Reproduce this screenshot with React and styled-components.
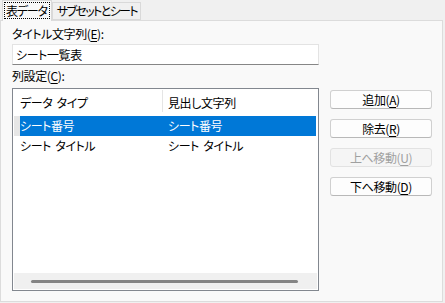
import React from "react";
import styled, { createGlobalStyle } from "styled-components";

const GlobalStyle = createGlobalStyle`
  html, body {
    margin: 0;
    padding: 0;
    background: #f0f0f0;
  }
  body {
    width: 445px;
    height: 303px;
    overflow: hidden;
    font-family: "Noto Sans CJK JP", "Noto Sans", sans-serif;
    font-size: 12px;
    font-feature-settings: "palt";
    letter-spacing: -0.4px;
    word-spacing: 2px;
    color: #000;
  }
`;

const Window = styled.div`
  width: 445px;
  height: 303px;
  display: flex;
  flex-direction: column;
`;

const TabStrip = styled.div`
  display: flex;
  align-items: flex-end;
  height: 20px;
  padding-left: 2px;
  position: relative;
  z-index: 1;
`;

const Tab = styled.div`
  box-sizing: border-box;
  height: ${(p) => (p.$active ? "21px" : "18px")};
  margin-bottom: ${(p) => (p.$active ? "-1px" : "0")};
  padding: ${(p) => (p.$active ? "1px 1px 0" : "0 3px 0 4px")};
  border: 1px solid #d9d9d9;
  border-bottom: ${(p) => (p.$active ? "none" : "1px solid #d9d9d9")};
  background: ${(p) => (p.$active ? "#f9f9f9" : "#f0f0f0")};
  display: flex;
  align-items: ${(p) => (p.$active ? "flex-start" : "center")};
  line-height: 16px;
  letter-spacing: ${(p) => (p.$active ? "-1.2px" : "-1.6px")};
  white-space: nowrap;
`;

const Focus = styled.span`
  display: block;
  padding: 0 2px 0 1px;
  border: 1px dotted #000;
  line-height: 15px;
`;

const Panel = styled.div`
  box-sizing: border-box;
  width: 443px;
  height: 282px;
  border: 1px solid #dcdcdc;
  background: #f9f9f9;
  padding: 5px 0 0 11px;
  display: flex;
  flex-direction: column;
`;

const Label = styled.div`
  line-height: 16px;
  height: 16px;
  margin-top: ${(p) => p.$mt || 0}px;
`;

const Key = styled.span`
  text-decoration: underline;
  text-underline-offset: 2px;
`;

const TextInput = styled.div`
  box-sizing: border-box;
  width: 307px;
  height: 21px;
  margin-top: 2px;
  background: #fff;
  border: 1px solid #e3e3e3;
  border-bottom-color: #868686;
  padding: 0 3px;
  line-height: 19px;
`;

const Row = styled.div`
  display: flex;
  gap: 11px;
  margin-top: 4px;
`;

const ListBox = styled.div`
  box-sizing: border-box;
  width: 307px;
  height: 203px;
  border: 1px solid #82878f;
  background: #fff;
  padding: 1px;
  display: flex;
  flex-direction: column;
`;

const Header = styled.div`
  display: grid;
  grid-template-columns: 148px 1fr;
  height: 25px;
  margin-bottom: 1px;
`;

const HeadCell = styled.div`
  box-sizing: border-box;
  display: flex;
  align-items: center;
  height: ${(p) => (p.$first ? "25px" : "22px")};
  padding-left: ${(p) => (p.$first ? "6px" : "5px")};
  padding-top: ${(p) => (p.$first ? "0" : "3px")};
  border-left: ${(p) => (p.$first ? "none" : "1px solid #e5e5e5")};
  white-space: pre;
`;

const ItemRow = styled.div`
  display: grid;
  grid-template-columns: 6px 148px 1fr;
  height: 20px;
  line-height: 20px;
  color: ${(p) => (p.$selected ? "#fff" : "#000")};
  margin-right: 1px;
`;

const Gutter = styled.div`
  background: ${(p) => (p.$selected ? "#e6e6e6" : "transparent")};
`;

const Cell = styled.div`
  background: ${(p) => (p.$selected ? "#0078d7" : "transparent")};
  white-space: nowrap;
`;

const Spacer = styled.div`
  flex: 1;
`;

const HScroll = styled.div`
  height: 16px;
  background: #f0f0f0;
  display: flex;
  align-items: center;
  padding: 0 19px 0 17px;
`;

const Thumb = styled.div`
  flex: 1;
  height: 3px;
  border-radius: 2px;
  background: #858585;
`;

const Buttons = styled.div`
  display: flex;
  flex-direction: column;
  gap: 10px;
  margin-top: 2px;
`;

const Button = styled.div`
  box-sizing: border-box;
  width: 102px;
  height: 19px;
  border: 1px solid ${(p) => (p.$disabled ? "#e2e2e2" : "#d0d0d0")};
  border-bottom-color: ${(p) => (p.$disabled ? "#e2e2e2" : "#b8b8b8")};
  border-radius: 3px;
  background: ${(p) => (p.$disabled ? "#f5f5f5" : "#fdfdfd")};
  color: ${(p) => (p.$disabled ? "#a0a0a0" : "#000")};
  display: flex;
  align-items: center;
  justify-content: center;
  line-height: 16px;
`;

const rows = [
  { type: "シート番号", title: "シート番号", selected: true },
  { type: "シート タイトル", title: "シート タイトル", selected: false },
];

export default function App() {
  return (
    <Window>
      <GlobalStyle />
      <TabStrip>
        <Tab $active>
          <Focus>表データ</Focus>
        </Tab>
        <Tab>サブセットとシート</Tab>
      </TabStrip>
      <Panel>
        <Label>
          タイトル文字列(<Key>E</Key>):
        </Label>
        <TextInput>シート一覧表</TextInput>
        <Label $mt={3}>
          列設定(<Key>C</Key>):
        </Label>
        <Row>
          <ListBox>
            <Header>
              <HeadCell $first>データ タイプ</HeadCell>
              <HeadCell>見出し文字列</HeadCell>
            </Header>
            {rows.map((r) => (
              <ItemRow key={r.type} $selected={r.selected}>
                <Gutter $selected={r.selected} />
                <Cell $selected={r.selected}>{r.type}</Cell>
                <Cell $selected={r.selected}>{r.title}</Cell>
              </ItemRow>
            ))}
            <Spacer />
            <HScroll>
              <Thumb />
            </HScroll>
          </ListBox>
          <Buttons>
            <Button>
              追加(<Key>A</Key>)
            </Button>
            <Button>
              除去(<Key>R</Key>)
            </Button>
            <Button $disabled>
              上へ移動(<Key>U</Key>)
            </Button>
            <Button>
              下へ移動(<Key>D</Key>)
            </Button>
          </Buttons>
        </Row>
      </Panel>
    </Window>
  );
}
